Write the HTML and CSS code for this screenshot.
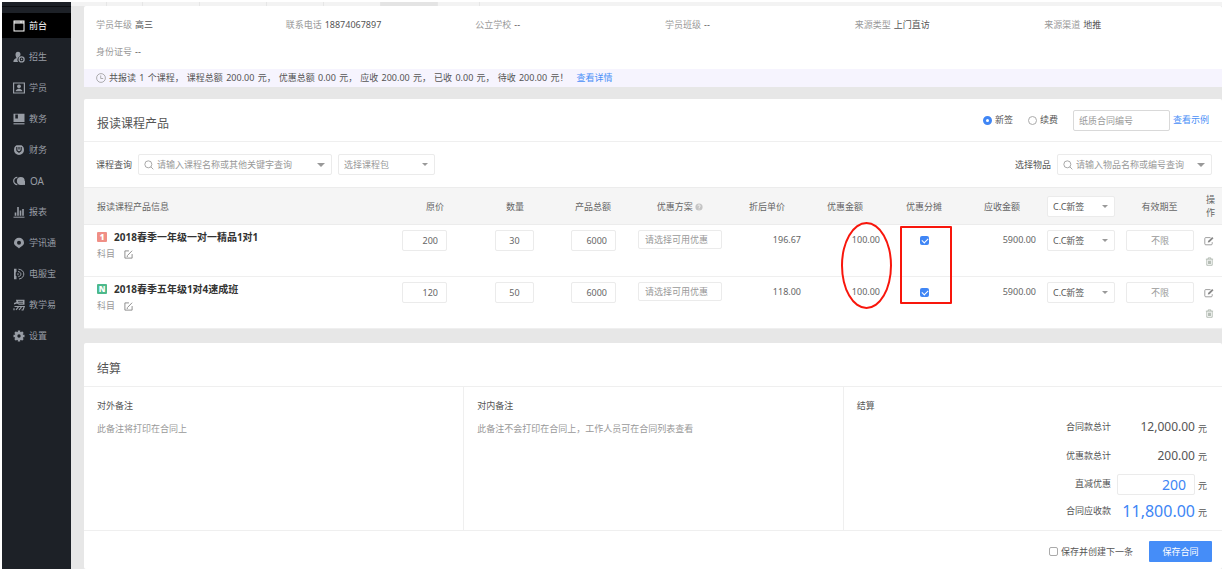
FILE: index.html
```html
<!DOCTYPE html>
<html lang="zh-CN">
<head>
<meta charset="utf-8">
<title>报读课程</title>
<link rel="stylesheet" href="styles.css">
</head>
<body>
<svg class="sprite" aria-hidden="true">
  <symbol id="i-search" viewBox="0 0 12 12"><circle cx="5.2" cy="5.2" r="4.2" fill="none" stroke="currentColor"/><path d="M8.2 8.2l3 3" stroke="currentColor"/></symbol>
  <symbol id="i-compose" viewBox="0 0 10 10"><path d="M5.5 1H1v8h8V4.5M3.8 6.2L9 .8M3 7h1.4" fill="none" stroke="currentColor" stroke-width=".9"/></symbol>
  <symbol id="i-edit" viewBox="0 0 10 10"><path d="M6.5 1.6H1.8a1 1 0 0 0-1 1v5.2a1 1 0 0 0 1 1h5.4a1 1 0 0 0 1-1V6.2" fill="none" stroke="currentColor" stroke-width=".8"/><path d="M3.8 6.600l.3-1.700L8.200 1l1.300 1.200-4 4z" fill="currentColor"/></symbol>
  <symbol id="i-trash" viewBox="0 0 10 10"><path d="M1 2.4h8M3.5 2.2V1h3v1.2M2 2.6v6.6h6V2.6M3.9 4v3.8M5 4v3.8M6.1 4v3.8" fill="none" stroke="currentColor" stroke-width=".9"/></symbol>
</svg>
<div class="app">
  <nav class="sidebar">
    <a class="nav active" href="#"><svg viewBox="0 0 12 12"><path d="M.5.500h11v11H.5zM1.500 3.500v7h9v-7z" fill="currentColor" fill-rule="evenodd"/><path d="M1.500 2h6M8.500 2h2" stroke="#000" stroke-width=".6"/></svg>前台</a>
    <a class="nav" href="#"><svg viewBox="0 0 12 12"><path d="M5 .8c1.700 0 2.600 1.200 2.500 2.800 0 .8-.4 1.500-.9 2A3.400 3.400 0 0 0 5.200 11H.4c0-2 .6-3 3.200-4C3 6 2.500 5 2.500 3.600 2.500 2 3.400.8 5 .8z" fill="currentColor"/><circle cx="8.600" cy="8.400" r="2.500" fill="none" stroke="currentColor" stroke-width="1.300"/><circle cx="8.600" cy="8.400" r=".8" fill="currentColor"/></svg>招生</a>
    <a class="nav" href="#"><svg viewBox="0 0 12 12"><path d="M.6 1h10.800v10H.6z" fill="none" stroke="currentColor" stroke-width="1.200"/><circle cx="6" cy="4.300" r="1.900" fill="currentColor"/><path d="M2.600 9.300c.2-1.600 1.500-2 2.400-2.600h2c.9.6 2.200 1 2.400 2.600z" fill="currentColor"/></svg>学员</a>
    <a class="nav" href="#"><svg viewBox="0 0 12 12"><path d="M.5.8h11V9H.5zM2.300 1.600v4h2.600v-4z" fill="currentColor" fill-rule="evenodd"/><path d="M.5 10.800h11" stroke="currentColor" stroke-width="1.200"/></svg>教务</a>
    <a class="nav" href="#"><svg viewBox="0 0 12 12"><path d="M3.500 1.200h5c2 1 2.500 2.800 2.500 4.900a5 4.900 0 0 1-10 0c0-2.100.5-3.900 2.500-4.900z" fill="currentColor"/><path d="M3.800 3v2.500a2.200 2.200 0 0 0 4.400 0V3M6 3v2.500M6 7.500V9" fill="none" stroke="#1d2127" stroke-width="1.100"/></svg>财务</a>
    <a class="nav latin" href="#"><svg viewBox="0 0 12 12"><path d="M4.300 2.400a3.600 3.600 0 0 0 0 7.200" fill="none" stroke="currentColor" stroke-width="1.200"/><circle cx="7.800" cy="6" r="3.900" fill="currentColor"/><path d="M8 6h4v3.900H8z" fill="currentColor"/></svg>OA</a>
    <a class="nav" href="#"><svg viewBox="0 0 12 12"><path d="M.5 11.200h11" stroke="currentColor"/><path d="M2.500 9.800V6.500M5 9.800V1M7.500 9.800V4.500M10 9.800V3" fill="none" stroke="currentColor" stroke-width="1.600"/></svg>报表</a>
    <a class="nav" href="#"><svg viewBox="0 0 12 12"><path d="M6 .8a5 5 0 0 1 5 5c0 2.600-2.500 3.500-5 5.600C3.500 9.300 1 8.400 1 5.800a5 5 0 0 1 5-5zm0 3a2 2 0 1 0 0 4 2 2 0 0 0 0-4z" fill="currentColor" fill-rule="evenodd"/></svg>学讯通</a>
    <a class="nav" href="#"><svg viewBox="0 0 12 12"><path d="M1 .8h2.500v3L2.700 4.500v3.200l.8.6v2.900H1z" fill="currentColor"/><path d="M5.500 1.200c7 .5 7 9 .5 9.800M5 3.500c3.800.5 3.800 4.600.3 5.200M5 5.200v2" fill="none" stroke="currentColor"/></svg>电服宝</a>
    <a class="nav" href="#"><svg viewBox="0 0 12 12"><path d="M3 .8h8.500v5H6L4 4.500l-3 1V4l2.500-1z" fill="currentColor"/><path d="M5 2.400h5M5.500 4.200H10" stroke="#1d2127" stroke-width=".7"/><path d="M1.500 7.500h9.800L10 11H8.500M8.500 7.800L6 11M5.500 7.800L3 10.800M1 9.200v2" fill="none" stroke="currentColor" stroke-width="1.200"/></svg>教学易</a>
    <a class="nav" href="#"><svg viewBox="0 0 12 12"><circle cx="6" cy="6" r="3" fill="none" stroke="currentColor" stroke-width="2.600"/><path d="M6 .5v2M6 9.500v2M.5 6h2M9.500 6h2M2.100 2.100l1.300 1.300M8.600 8.600l1.300 1.300M2.100 9.900l1.300-1.300M8.600 3.400l1.300-1.300" stroke="currentColor" stroke-width="2.400"/></svg>设置</a>
  </nav>
  <div class="page">
    <div class="tabs"><i class="t1"></i><i class="t1"></i><i class="t2"></i><i class="t3"></i><i class="t2"></i><i class="t2"></i><i class="t2 on"></i><i class="t4"></i></div>
    <main class="main">
      <section class="card student">
        <dl class="info">
          <div><dt>学员年级</dt><dd>高三</dd></div>
          <div><dt>联系电话</dt><dd>18874067897</dd></div>
          <div><dt>公立学校</dt><dd>--</dd></div>
          <div><dt>学员班级</dt><dd>--</dd></div>
          <div><dt>来源类型</dt><dd>上门直访</dd></div>
          <div><dt>来源渠道</dt><dd>地推</dd></div>
          <div><dt>身份证号</dt><dd>--</dd></div>
        </dl>
        <p class="notice"><svg viewBox="0 0 10 10"><circle cx="5" cy="5" r="4.400" fill="none" stroke="currentColor" stroke-width=".8"/><path d="M4.700 2.500v3h2.500" fill="none" stroke="currentColor" stroke-width=".8"/></svg><span>共报读 <b>1</b> 个课程，</span><span>课程总额 <b>200.00</b> 元，</span><span>优惠总额 <b>0.00</b> 元，</span><span>应收 <b>200.00</b> 元，</span><span>已收 <b>0.00</b> 元，</span><span>待收 <b>200.00</b> 元！</span><a href="#">查看详情</a></p>
      </section>

      <section class="card">
        <header class="head">
          <h2>报读课程产品</h2>
          <div class="sign">
            <label><input type="radio" name="sign" checked>新签</label>
            <label><input type="radio" name="sign">续费</label>
            <input class="field paper" type="text" placeholder="纸质合同编号" aria-label="纸质合同编号">
            <a href="#">查看示例</a>
          </div>
        </header>
        <div class="filters">
          <label for="course">课程查询</label>
          <span class="combo course"><svg><use href="#i-search"/></svg><input id="course" class="field" type="text" placeholder="请输入课程名称或其他关键字查询"></span>
          <span class="combo pack"><select class="field" aria-label="课程包"><option>选择课程包</option></select></span>
          <label class="goods-label" for="goods">选择物品</label>
          <span class="combo goods"><svg><use href="#i-search"/></svg><input id="goods" class="field" type="text" placeholder="请输入物品名称或编号查询"></span>
        </div>
        <table class="products">
          <colgroup><col><col class="w90"><col class="w70"><col class="w86"><col class="w88"><col class="w86"><col class="w70"><col class="w88"><col class="w68"><col class="w84"><col class="w79"><col class="w23"></colgroup>
          <thead><tr>
            <th class="first">报读课程产品信息</th><th>原价</th><th>数量</th><th>产品总额</th>
            <th>优惠方案 <svg class="help" viewBox="0 0 10 10"><circle cx="5" cy="5" r="4.500" fill="#c4c4c4"/><path d="M3.500 4c0-2 3-2 3-.2C6.500 5 5 5 5 6.200M5 7v1" fill="none" stroke="#fff"/></svg></th>
            <th>折后单价</th><th>优惠金额</th><th>优惠分摊</th><th>应收金额</th>
            <th class="kind"><span class="combo"><select class="field" aria-label="全部签约类型"><option>C.C新签</option></select></span></th>
            <th>有效期至</th><th class="op">操作</th>
          </tr></thead>
          <tbody>
          <tr>
            <td class="first"><div class="name"><b class="badge red">1</b>2018春季一年级一对一精品1对1</div><div class="subject">科目<button type="button" aria-label="修改科目"><svg><use href="#i-compose"/></svg></button></div></td>
            <td class="price"><input class="field num" type="text" value="200" aria-label="原价"></td>
            <td class="qty"><input class="field" type="text" value="30" aria-label="数量"></td>
            <td class="total"><input class="field num" type="text" value="6000" aria-label="产品总额"></td>
            <td class="plan"><input class="field" type="text" placeholder="请选择可用优惠" aria-label="优惠方案"></td>
            <td class="money inset">196.67</td>
            <td class="money">100.00<i class="mark oval"></i></td>
            <td class="share"><input type="checkbox" checked aria-label="优惠分摊"><i class="mark box"></i></td>
            <td class="money">5900.00</td>
            <td class="kind"><span class="combo"><select class="field" aria-label="签约类型"><option>C.C新签</option></select></span></td>
            <td class="until"><input class="field" type="text" placeholder="不限" aria-label="有效期至"></td>
            <td class="ops"><button type="button" aria-label="编辑"><svg><use href="#i-edit"/></svg></button><button type="button" aria-label="删除"><svg><use href="#i-trash"/></svg></button></td>
          </tr>
          <tr>
            <td class="first"><div class="name"><b class="badge green">N</b>2018春季五年级1对4速成班</div><div class="subject">科目<button type="button" aria-label="修改科目"><svg><use href="#i-compose"/></svg></button></div></td>
            <td class="price"><input class="field num" type="text" value="120" aria-label="原价"></td>
            <td class="qty"><input class="field" type="text" value="50" aria-label="数量"></td>
            <td class="total"><input class="field num" type="text" value="6000" aria-label="产品总额"></td>
            <td class="plan"><input class="field" type="text" placeholder="请选择可用优惠" aria-label="优惠方案"></td>
            <td class="money inset">118.00</td>
            <td class="money">100.00</td>
            <td class="share"><input type="checkbox" checked aria-label="优惠分摊"></td>
            <td class="money">5900.00</td>
            <td class="kind"><span class="combo"><select class="field" aria-label="签约类型"><option>C.C新签</option></select></span></td>
            <td class="until"><input class="field" type="text" placeholder="不限" aria-label="有效期至"></td>
            <td class="ops"><button type="button" aria-label="编辑"><svg><use href="#i-edit"/></svg></button><button type="button" aria-label="删除"><svg><use href="#i-trash"/></svg></button></td>
          </tr>
          </tbody>
        </table>
      </section>

      <section class="card last">
        <header class="head"><h2>结算</h2></header>
        <div class="settle">
          <div class="pane"><label for="outer">对外备注</label><textarea id="outer" placeholder="此备注将打印在合同上"></textarea></div>
          <div class="pane"><label for="inner">对内备注</label><textarea id="inner" placeholder="此备注不会打印在合同上，工作人员可在合同列表查看"></textarea></div>
          <div class="pane">
            <h3>结算</h3>
            <div class="sums">
              <span>合同款总计</span><output>12,000.00</output><span>元</span>
              <span>优惠款总计</span><output>200.00</output><span>元</span>
              <label for="cut">直减优惠</label><input id="cut" class="field" type="text" value="200"><span>元</span>
              <span>合同应收款</span><output class="due">11,800.00</output><span>元</span>
            </div>
          </div>
        </div>
        <footer class="foot">
          <label><input type="checkbox">保存并创建下一条</label>
          <button class="save" type="button">保存合同</button>
        </footer>
      </section>
    </main>
  </div>
</div>
</body>
</html>
```
FILE: styles.css
```css
* { box-sizing: border-box; }
body {
  margin: 0;
  padding: 2px;
  background: #fff;
  color: #555;
  font: 9px/14px "Noto Sans", "Noto Sans CJK SC", sans-serif;
}
h2, h3, p, dl, dd { margin: 0; font-weight: 400; }
a { color: #4a8ff7; text-decoration: none; }
input, select, textarea, button { margin: 0; font: inherit; color: inherit; }
button { padding: 0; border: 0; background: none; }
svg { display: block; flex: none; }
.sprite { display: none; }

.app { display: flex; min-height: calc(100vh - 4px); }
.sidebar {
  flex: none;
  width: 69px;
  padding-top: 11px;
  background: linear-gradient(#1d2127 4px, #0c0e11 4px, #0c0e11 5px, #1d2127 5px);
}
.nav {
  display: flex;
  align-items: center;
  gap: 4px;
  height: 25px;
  margin-bottom: 6px;
  padding-left: 11px;
  color: #989da5;
}
.nav svg { width: 12px; height: 12px; }
.nav.active { background: #000; color: #fff; }
.nav.latin { gap: 5px; font-size: 10px; }

.page {
  display: flex;
  flex-direction: column;
  flex: 1;
  min-width: 0;
  background: #e7e7e7;
}
.tabs { display: flex; height: 4px; background: #f3f3f3; }
.tabs i { border-right: 1px solid #e6e6e6; }
.t1 { width: 36px; }
.t2 { width: 57px; }
.t3 { width: 67px; }
.t4 { width: 42px; }
.tabs .on { background: #e4e4e4; }
.main {
  display: flex;
  flex-direction: column;
  flex: 1;
  padding-left: 13px;
}
.card { background: #fff; border-radius: 2px; }
.card + .card { margin-top: 12px; }
.card + .last { flex: 1; display: flex; flex-direction: column; margin-top: 14px; }

.info {
  display: grid;
  grid-template-columns: repeat(6, 1fr);
  row-gap: 13px;
  padding: 12px 0 10px;
}
.info div { display: flex; gap: 3px; padding-left: 12px; }
.info dt { color: #999; }
.info dd { color: #555; }
.notice {
  display: flex;
  align-items: center;
  gap: 3px;
  height: 18px;
  padding-left: 12px;
  background: #f6f4fe;
}
.notice svg { width: 10px; height: 10px; color: #999; }
.notice b { margin: 0 1px; font-weight: 400; }
.notice a { margin-left: 5px; }

.head {
  display: flex;
  align-items: center;
  justify-content: space-between;
  height: 43px;
  padding: 8px 13px 0 13px;
  border-bottom: 1px solid #efefef;
}
.last .head { height: 44px; }
.head h2 { font-size: 12px; line-height: 18px; }
.sign { display: flex; align-items: center; padding-bottom: 8px; }
.sign label { display: flex; align-items: center; gap: 3px; margin-right: 15px; }
.sign a { margin-left: 3px; }

input[type="radio"] {
  appearance: none;
  width: 9px;
  height: 9px;
  border: 1px solid #aaa;
  border-radius: 50%;
  background: #fff;
}
input[type="radio"]:checked { border: 3px solid #4086f5; }
input[type="checkbox"] {
  appearance: none;
  width: 9px;
  height: 9px;
  border: 1px solid #aaa;
  border-radius: 2px;
  background: #fff;
}
input[type="checkbox"]:checked { position: relative; border: 0; background: #4086f5; }
input[type="checkbox"]:checked::after {
  content: "";
  position: absolute;
  left: 2px;
  top: 2px;
  width: 5px;
  height: 3px;
  border: solid #fff;
  border-width: 0 0 1px 1px;
  transform: rotate(-45deg);
}

.field {
  appearance: none;
  display: block;
  width: 100%;
  height: 21px;
  padding: 0 5px;
  border: 1px solid #ebebeb;
  border-radius: 2px;
  background: #fff;
  outline: 0;
}
::placeholder { color: #999; opacity: 1; }
.sign .paper { width: 97px; border-color: #d9d9d9; }

.combo { position: relative; display: block; }
.combo::after {
  content: "";
  position: absolute;
  right: 7px;
  top: 9px;
  border: solid transparent;
  border-width: 4px 4px 0;
  border-top-color: #999;
}
.combo svg {
  position: absolute;
  left: 6px;
  top: 6px;
  width: 10px;
  height: 10px;
  color: #999;
}
.combo input { padding-left: 18px; }
.filters { display: flex; align-items: center; height: 45px; padding: 0 10px 0 12px; }
.course { width: 194px; margin: 0 6px; }
.pack { width: 97px; }
.pack select { color: #999; }
.pack::after, .kind .combo::after { border-width: 3px 3px 0; }
.goods-label { margin-left: auto; }
.goods { width: 155px; margin-left: 6px; }

.products { width: 100%; table-layout: fixed; border-collapse: collapse; }
.w23 { width: 23px; }
.w68 { width: 68px; }
.w70 { width: 70px; }
.w79 { width: 79px; }
.w84 { width: 84px; }
.w86 { width: 86px; }
.w88 { width: 88px; }
.w90 { width: 90px; }
.products th {
  height: 37px;
  padding: 0;
  border: solid #ececec;
  border-width: 1px 0;
  background: #f5f5f5;
  color: #666;
  font-weight: 400;
  line-height: 13px;
}
.products td {
  position: relative;
  height: 52px;
  padding: 5px 0 0;
  border-bottom: 1px solid #efefef;
  vertical-align: top;
  color: #666;
}
.products .first { padding-left: 13px; text-align: left; }
.products th.op { padding: 0 6px; }
.help { display: inline-block; width: 8px; height: 8px; vertical-align: -1px; }
.name {
  display: flex;
  align-items: center;
  gap: 7px;
  color: #333;
  font-size: 10px;
  font-weight: 700;
}
.badge {
  width: 10px;
  height: 10px;
  border-radius: 1px;
  color: #fff;
  font-size: 8px;
  line-height: 10px;
  text-align: center;
}
.red { background: #f08f86; }
.green { background: #4cb98b; }
.subject { display: flex; align-items: center; gap: 9px; padding-top: 3px; color: #999; }
.subject svg { width: 9px; height: 9px; color: #777; }
.num { padding-right: 8px; text-align: right; }
.price .field { width: 45px; margin-left: 12px; }
.qty .field { width: 39px; margin-left: 15px; text-align: center; }
.total .field { width: 45px; margin-left: 21px; }
.plan .field { width: 84px; height: 19px; margin-left: 2px; padding-left: 6px; }
.money { text-align: right; }
.products .money, .products .share { padding-top: 8px; }
.products .inset { padding-right: 9px; }
.share input { display: block; margin: 3px auto 0; }
.kind .combo { width: 68px; margin-left: 11px; }
.kind .field { color: #555; }
.until .field { width: 68px; margin-left: 6px; text-align: center; }
.ops svg { width: 10px; height: 10px; color: #888; }
.ops button { display: block; margin: 11px auto 0; }
.ops button + button svg { width: 9px; height: 9px; color: #a5aea5; }
.products .ops { padding: 0 3px 0 0; }

.mark { position: absolute; z-index: 1; border: 2px solid #f8160c; pointer-events: none; }
.oval { left: 31px; top: -3px; width: 51px; height: 87px; border-radius: 50%; }
.box { left: 20px; top: 1px; width: 52px; height: 78px; border-radius: 1px; }

.settle { display: grid; grid-template-columns: repeat(3, 1fr); flex: 1; border-bottom: 1px solid #efefef; }
.pane { display: flex; flex-direction: column; padding: 12px 0 0 13px; }
.pane + .pane { border-left: 1px solid #efefef; }
.pane h3 { font-size: 9px; }
textarea {
  flex: 1;
  width: 100%;
  margin-top: 9px;
  padding: 0;
  border: 0;
  outline: 0;
  resize: none;
  background: none;
}
.sums {
  display: grid;
  grid-template-columns: 1fr 78px auto;
  grid-template-rows: 28px 29px 28px 26px;
  align-items: center;
  column-gap: 3px;
  padding-right: 15px;
  text-align: right;
}
.sums > :nth-child(3n+1) { padding-right: 3px; }
.sums > :nth-child(3n) { padding-top: 3px; }
.sums output { font-size: 12px; line-height: 20px; white-space: nowrap; }
.sums .due { color: #4086f5; font-size: 16px; }
.sums .field { padding-right: 8px; color: #4086f5; font-size: 14px; text-align: right; }
.foot {
  display: flex;
  align-items: center;
  justify-content: flex-end;
  gap: 16px;
  height: 38px;
  padding: 3px 10px 0 0;
}
.foot label { display: flex; align-items: center; gap: 3px; }
.save { width: 63px; height: 21px; border-radius: 1px; background: #458df8; color: #fff; }
```
